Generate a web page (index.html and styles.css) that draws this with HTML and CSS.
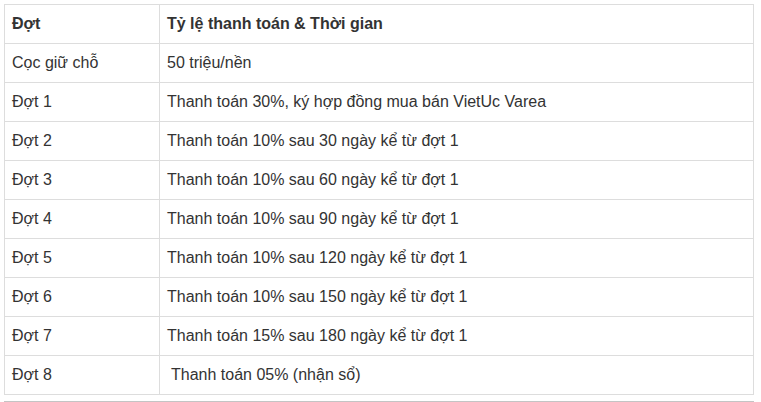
FILE: index.html
```html
<!DOCTYPE html>
<html lang="vi">
<head>
<meta charset="utf-8">
<link rel="stylesheet" href="styles.css">
</head>
<body>
<div class="wrap">
<table class="pay">
<thead>
<tr><th class="c1">Đợt</th><th>Tỷ lệ thanh toán &amp; Thời gian</th></tr>
</thead>
<tbody>
<tr><td>Cọc giữ chỗ</td><td>50 triệu/nền</td></tr>
<tr><td>Đợt 1</td><td>Thanh toán 30%, ký hợp đồng mua bán VietUc Varea</td></tr>
<tr><td>Đợt 2</td><td>Thanh toán 10% sau 30 ngày kể từ đợt 1</td></tr>
<tr><td>Đợt 3</td><td>Thanh toán 10% sau 60 ngày kể từ đợt 1</td></tr>
<tr><td>Đợt 4</td><td>Thanh toán 10% sau 90 ngày kể từ đợt 1</td></tr>
<tr><td>Đợt 5</td><td>Thanh toán 10% sau 120 ngày kể từ đợt 1</td></tr>
<tr><td>Đợt 6</td><td>Thanh toán 10% sau 150 ngày kể từ đợt 1</td></tr>
<tr><td>Đợt 7</td><td>Thanh toán 15% sau 180 ngày kể từ đợt 1</td></tr>
<tr><td>Đợt 8</td><td><span class="indent">Thanh toán 05% (nhận sổ)</span></td></tr>
</tbody>
</table>
<div class="rule"></div>
</div>
</body>
</html>
```

FILE: styles.css
```css
html, body {
  margin: 0;
  padding: 0;
  background: #fff;
}
body {
  font-family: "Liberation Sans", Arial, sans-serif;
  font-size: 16px;
  color: #333;
}
.wrap {
  padding: 4px 0 0 4px;
  width: 750px;
}
.pay {
  width: 750px;
  border-collapse: collapse;
  border: 1px solid #ddd;
}
.pay th, .pay td {
  border: 1px solid #ddd;
  height: 38px;
  padding: 0 7px;
  text-align: left;
  vertical-align: middle;
  line-height: 20px;
}
.pay th {
  font-weight: bold;
}
.pay .c1 {
  width: 140px;
}
.indent {
  padding-left: 4px;
}
.rule {
  margin-top: 6px;
  height: 2px;
  background: #c4c4c4;
  width: 750px;
}
```
